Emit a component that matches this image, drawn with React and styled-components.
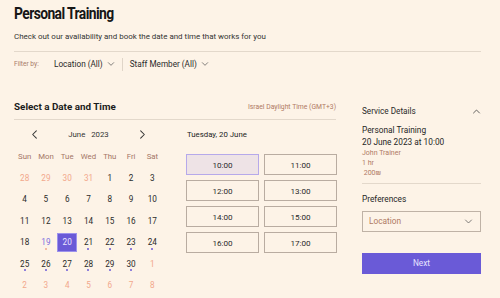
import React from "react";
import styled, { createGlobalStyle } from "styled-components";

const GlobalStyle = createGlobalStyle`
  body {
    margin: 0;
    background: #fdf3e7;
    font-family: Roboto, "Liberation Sans", sans-serif;
    color: #222;
  }
`;

const Page = styled.div`
  width: 500px;
  height: 298px;
  padding: 0 19px 0 14px;
  box-sizing: border-box;
  overflow: hidden;
`;

const Title = styled.h1`
  margin: 3px 0 0;
  font-size: 13.9px;
  line-height: 20px;
  font-weight: 700;
  letter-spacing: -0.6px;
  color: #161616;
  transform: scaleY(1.18);
  transform-origin: left center;
`;

const Subtitle = styled.p`
  margin: 8px 0 0;
  font-size: 7.95px;
  line-height: 12px;
  color: #333;
`;

const Divider = styled.div`
  height: 1px;
  background: #e3d8cb;
  margin: ${props => props.$margin || "0"};
`;

const FilterBar = styled.div`
  display: flex;
  align-items: center;
  height: 22px;
  margin-top: 1px;
`;

const FilterLabel = styled.span`
  font-size: 6.6px;
  color: #a87b69;
  width: 40px;
`;

const FilterButton = styled.button`
  display: flex;
  align-items: center;
  gap: 4px;
  background: none;
  border: 0;
  padding: 0;
  font-family: inherit;
  font-size: 8.2px;
  color: #2a2a2a;
`;

const FilterSep = styled.span`
  width: 1px;
  height: 13px;
  background: #e0d5c8;
  margin: 0 7px 0 7px;
`;

const Main = styled.div`
  display: grid;
  grid-template-columns: 322px 119px;
  column-gap: 26px;
  margin-top: 24px;
`;

const SectionHead = styled.div`
  display: flex;
  justify-content: space-between;
  align-items: center;
  height: 14px;
`;

const SectionTitle = styled.h2`
  margin: 0;
  font-size: 9.85px;
  font-weight: 700;
  color: #1c1c1c;
`;

const TimeZone = styled.span`
  font-size: 6.8px;
  color: #b07a64;
  margin-top: 2px;
`;

const Picker = styled.div`
  display: grid;
  grid-template-columns: 149px 150px;
  column-gap: 23px;
  margin-top: 6px;
`;

const MonthNav = styled.div`
  display: flex;
  align-items: center;
  justify-content: space-between;
  height: 16px;
  padding: 0 15px 0 15px;
`;

const NavArrow = styled.button`
  background: none;
  border: 0;
  padding: 0;
  display: flex;
  color: #333;
`;

const MonthLabel = styled.span`
  font-size: 7.8px;
  color: #333;
  word-spacing: 4px;
`;

const DayGrid = styled.div`
  display: grid;
  grid-template-columns: repeat(7, 1fr);
  grid-auto-rows: 21.4px;
  margin-top: 4px;
`;

const WeekDay = styled.div`
  height: 20px;
  margin-bottom: 1.4px;
  display: flex;
  align-items: center;
  justify-content: center;
  font-size: 7.8px;
  color: #a47666;
`;

const Day = styled.div`
  position: relative;
  display: flex;
  align-items: center;
  justify-content: center;
  font-size: 8.2px;
  color: ${props =>
    props.$muted ? "#f2a88c" : props.$today ? "#7f71e0" : "#2b2b2b"};
`;

const DayBox = styled.span`
  width: 20px;
  height: 19px;
  display: flex;
  align-items: center;
  justify-content: center;
  box-sizing: border-box;
  ${props =>
    props.$selected &&
    `
    background: #6a5ad7;
    border: 1px solid #9c92ec;
    color: #eae6ff;
  `}
`;

const Dot = styled.span`
  position: absolute;
  left: 50%;
  top: 16.5px;
  width: 2px;
  height: 2px;
  margin-left: -1px;
  border-radius: 50%;
  background: ${props => props.$color};
`;

const DateLabel = styled.div`
  height: 16px;
  display: flex;
  align-items: center;
  font-size: 7.8px;
  color: #222;
  padding-left: 1px;
`;

const Slots = styled.div`
  display: grid;
  grid-template-columns: 73px 73px;
  grid-auto-rows: 21px;
  gap: 5px;
  margin-top: 12px;
`;

const Slot = styled.button`
  font-family: inherit;
  font-size: 8.1px;
  color: #2a2a2a;
  border: 1px solid ${props => (props.$active ? "#b6a9ea" : "#b9aca1")};
  background: ${props => (props.$active ? "#eee3e6" : "transparent")};
  padding: 0;
`;

const Sidebar = styled.aside`
  display: flex;
  flex-direction: column;
  padding-top: 5px;
`;

const SideHead = styled.div`
  display: flex;
  justify-content: space-between;
  align-items: center;
  height: 14px;
  font-size: 8.2px;
  color: #2a2a2a;
`;

const SideText = styled.div`
  font-size: 8.3px;
  line-height: 11.5px;
  color: #1f1f1f;
  margin-top: ${props => props.$top || "0"};
`;

const SideMeta = styled.div`
  font-size: 7px;
  line-height: 9.8px;
  color: #b07a64;
  margin-top: ${props => props.$top || "0"};
`;

const Select = styled.div`
  height: 21px;
  box-sizing: border-box;
  border: 1px solid #bfb2a6;
  display: flex;
  align-items: center;
  justify-content: space-between;
  padding: 0 7px 0 6px;
  font-size: 8.3px;
  color: #b07a64;
  margin-top: 5px;
`;

const NextButton = styled.button`
  height: 21px;
  margin-top: 21px;
  border: 0;
  background: #6a5ad7;
  color: #e6e2ff;
  font-family: inherit;
  font-size: 8.3px;
`;

const Chevron = ({ dir = "down", size = 8, color = "#555", weight = 1.1 }) => {
  const paths = {
    down: "M2 4l4 4 4-4",
    up: "M2 8l4-4 4 4",
    left: "M8 2L4 6l4 4",
    right: "M4 2l4 4-4 4"
  };
  return (
    <svg width={size} height={size} viewBox="0 0 12 12" fill="none">
      <path d={paths[dir]} stroke={color} strokeWidth={weight} strokeLinecap="round" strokeLinejoin="round" />
    </svg>
  );
};

const weekDays = ["Sun", "Mon", "Tue", "Wed", "Thu", "Fri", "Sat"];

const days = [
  ...[28, 29, 30, 31].map(d => ({ d, muted: true })),
  ...Array.from({ length: 30 }, (_, i) => ({ d: i + 1 })),
  ...[1, 2, 3, 4, 5, 6, 7, 8].map(d => ({ d, muted: true }))
];

const times = ["10:00", "11:00", "12:00", "13:00", "14:00", "15:00", "16:00", "17:00"];

export default function App() {
  return (
    <Page>
      <GlobalStyle />
      <Title>Personal Training</Title>
      <Subtitle>Check out our availability and book the date and time that works for you</Subtitle>
      <Divider $margin="8px 0 0" />
      <FilterBar>
        <FilterLabel>Filter by:</FilterLabel>
        <FilterButton>
          Location (All) <Chevron />
        </FilterButton>
        <FilterSep />
        <FilterButton>
          Staff Member (All) <Chevron />
        </FilterButton>
      </FilterBar>

      <Main>
        <section>
          <SectionHead>
            <SectionTitle>Select a Date and Time</SectionTitle>
            <TimeZone>Israel Daylight Time (GMT+3)</TimeZone>
          </SectionHead>
          <Divider $margin="6px 0 0" />
          <Picker>
            <div>
              <MonthNav>
                <NavArrow>
                  <Chevron dir="left" size={11} color="#333" />
                </NavArrow>
                <MonthLabel>June 2023</MonthLabel>
                <NavArrow>
                  <Chevron dir="right" size={11} color="#333" />
                </NavArrow>
              </MonthNav>
              <DayGrid>
                {weekDays.map(w => (
                  <WeekDay key={w}>{w}</WeekDay>
                ))}
                {days.map((day, i) => {
                  const today = !day.muted && day.d === 19;
                  const selected = !day.muted && day.d === 20;
                  const available = !day.muted && day.d > 20;
                  return (
                    <Day key={i} $muted={day.muted} $today={today}>
                      <DayBox $selected={selected}>{day.d}</DayBox>
                      {today && <Dot $color="#f2a88c" />}
                      {available && <Dot $color="#6a5ad7" />}
                    </Day>
                  );
                })}
              </DayGrid>
            </div>
            <div>
              <DateLabel>Tuesday, 20 June</DateLabel>
              <Slots>
                {times.map(t => (
                  <Slot key={t} $active={t === "10:00"}>
                    {t}
                  </Slot>
                ))}
              </Slots>
            </div>
          </Picker>
        </section>

        <Sidebar>
          <SideHead>
            Service Details
            <Chevron dir="up" size={9} color="#444" />
          </SideHead>
          <SideText $top="7px">Personal Training</SideText>
          <SideText>20 June 2023 at 10:00</SideText>
          <SideMeta $top="1px">John Trainer</SideMeta>
          <SideMeta>1 hr</SideMeta>
          <SideMeta>&nbsp;200₪</SideMeta>
          <Divider $margin="5px 0 0" />
          <SideText $top="10px">Preferences</SideText>
          <Select>
            Location
            <Chevron size={9} color="#555" weight={1} />
          </Select>
          <NextButton>Next</NextButton>
        </Sidebar>
      </Main>
    </Page>
  );
}
